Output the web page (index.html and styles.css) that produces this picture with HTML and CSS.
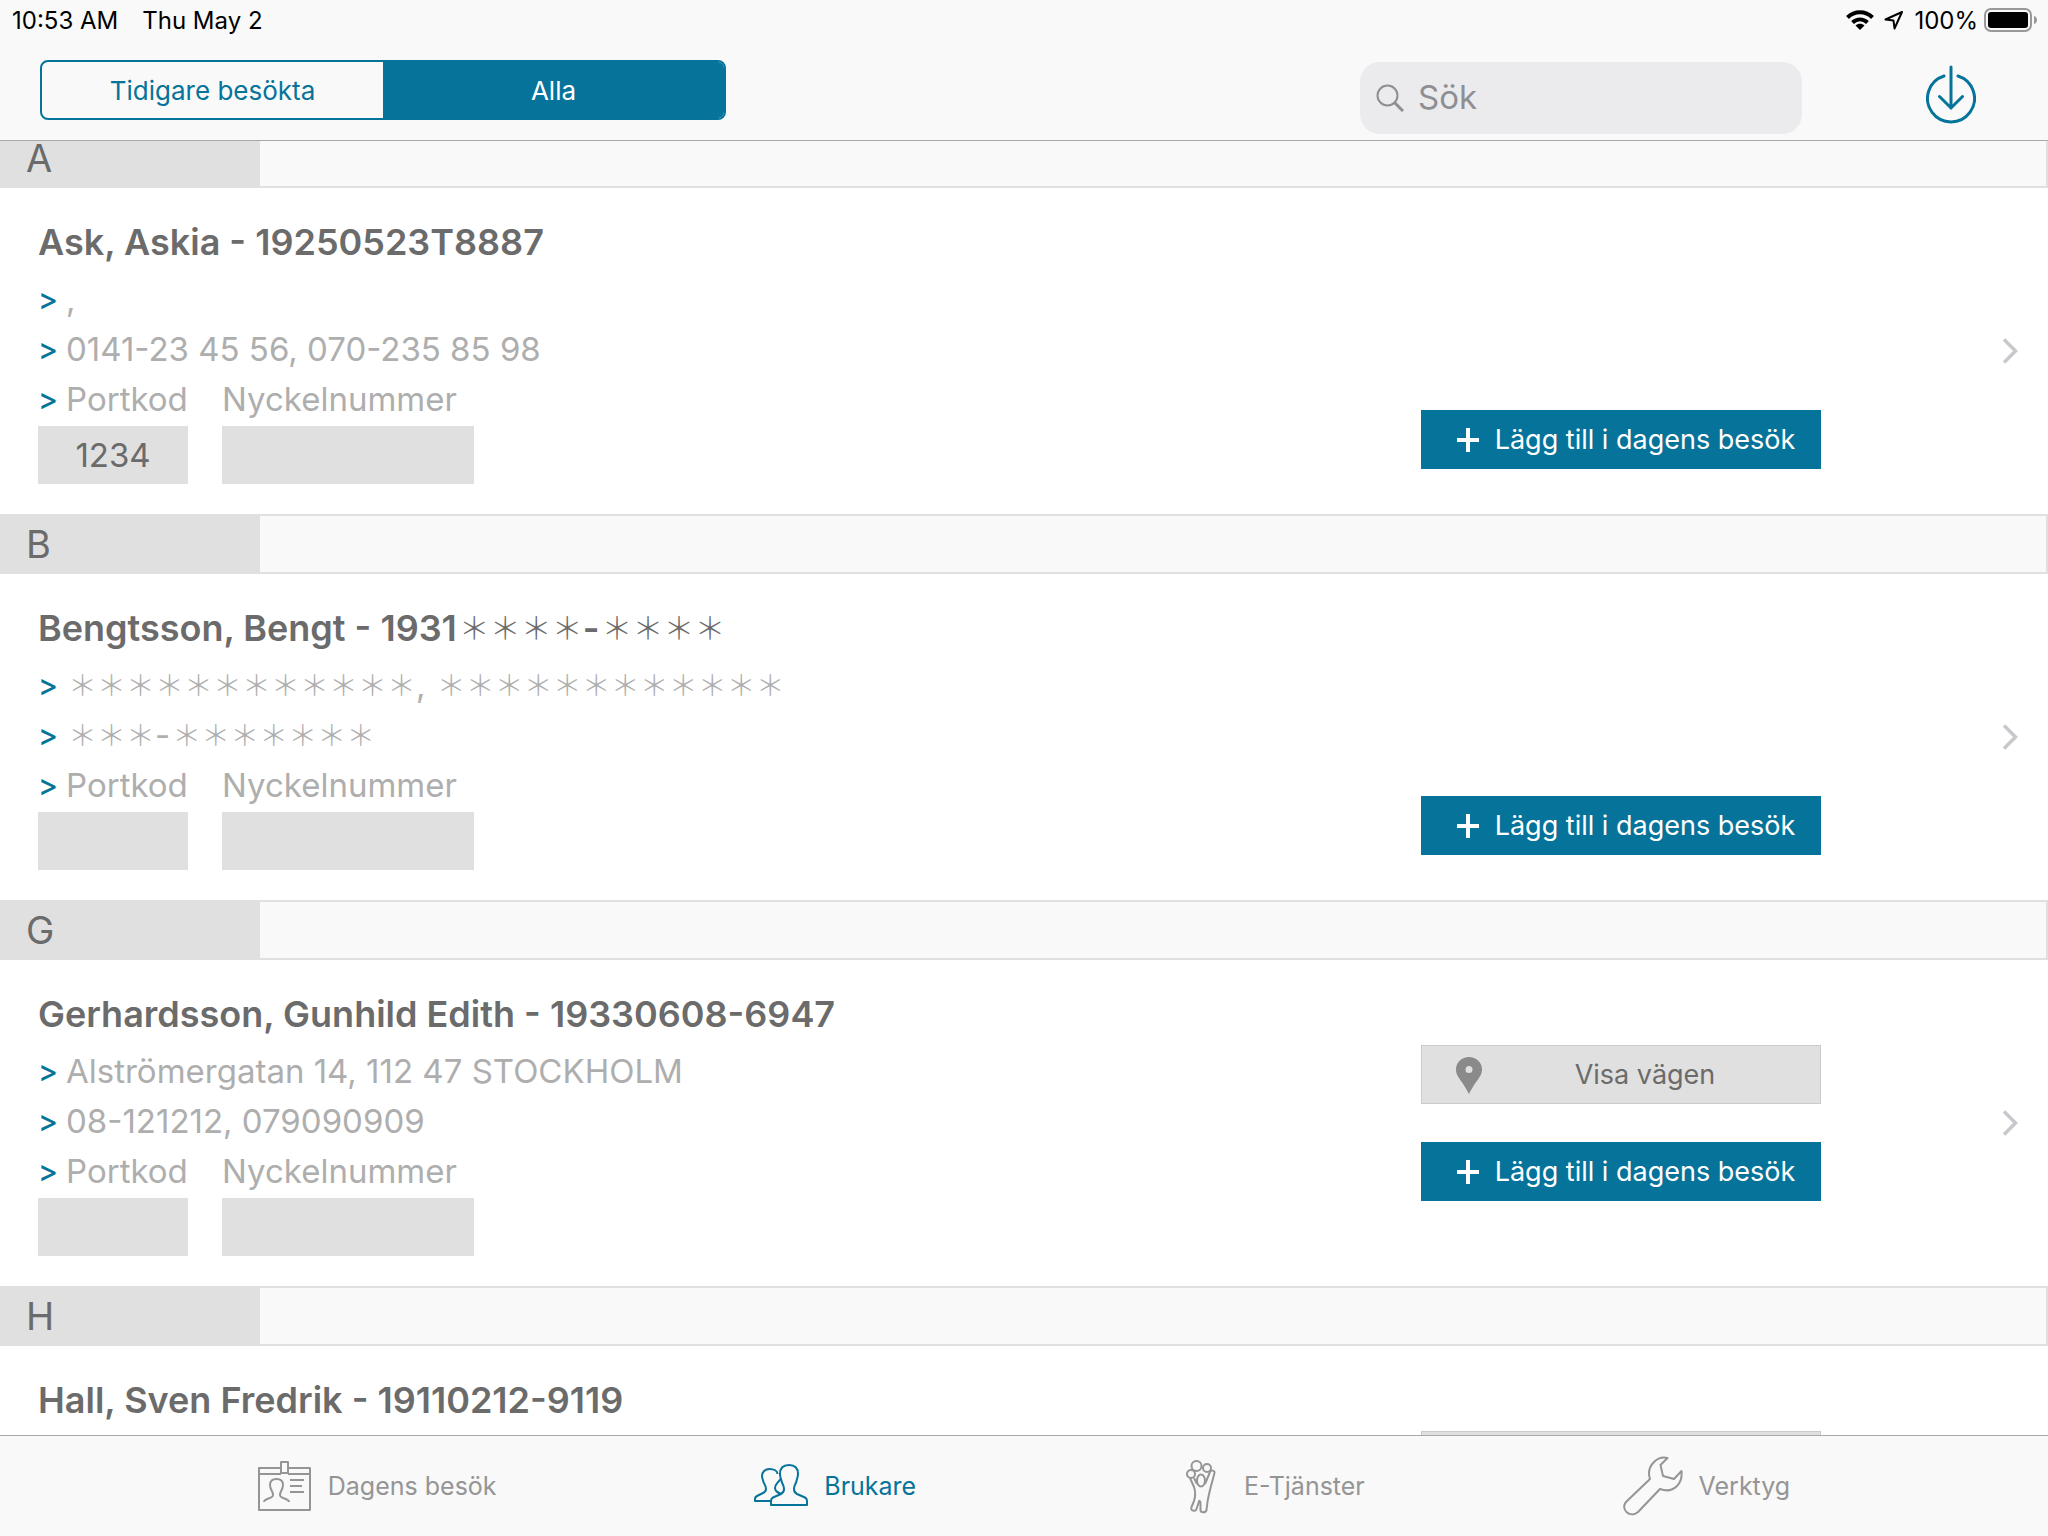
FILE: index.html
```html
<!DOCTYPE html>
<html lang="sv">
<head>
<meta charset="utf-8">
<meta name="viewport" content="width=device-width, initial-scale=1">
<title>Brukare</title>
<link rel="stylesheet" href="styles.css">
</head>
<body>
<svg class="sprite" aria-hidden="true">
  <symbol id="plus" viewBox="0 0 26 26"><path d="M13 1v24M2 13h22" fill="none" stroke="currentColor" stroke-width="4"/></symbol>
  <symbol id="pin" viewBox="0 0 26 38"><path fill="currentColor" fill-rule="evenodd" d="M13 1C6 1 0 6 0 13.500C0 21 6 24 13 38C20 24 26 21 26 13.500C26 6 20 1 13 1ZM13 10a3.500 3.500 0 1 1 0 7a3.500 3.500 0 1 1 0-7Z"/></symbol>
  <symbol id="chevron" viewBox="0 0 16 26"><path d="M2 1.500L13.500 13L2 24.500" fill="none" stroke="currentColor" stroke-width="3.500"/></symbol>
</svg>

<header class="top">
  <div class="status">
    <div class="status-group status-left"><span>10:53 AM</span><span>Thu May 2</span></div>
    <div class="status-group status-right">
      <svg width="28" height="20" viewBox="0 0 28 20" aria-hidden="true"><g fill="none" stroke="#000" stroke-width="4"><path d="M1.500 7.500C8.500 .5 19.500 .5 26.500 7.500"/><path d="M6.500 12.500C11 8.500 17 8.500 21.500 12.500"/></g><path d="M14 20L9.500 15.500C12 13.300 16 13.300 18.500 15.500Z"/></svg>
      <svg width="20" height="20" viewBox="0 0 20 20" aria-hidden="true"><path d="M18 2L1.500 9.500L9.500 10.500L10.500 18.500Z" fill="none" stroke="#000" stroke-width="2" stroke-linejoin="round"/></svg>
      <span class="battery">100%
        <svg width="54" height="24" viewBox="0 0 54 24" aria-hidden="true"><rect x="1" y="1" width="46" height="22" rx="6" fill="none" stroke="#999" stroke-width="2"/><rect x="4" y="4" width="40" height="16" rx="3"/><path d="M50 8c4 1 4 7 0 8z" fill="#999"/></svg>
      </span>
    </div>
  </div>
  <div class="toolbar">
    <div class="segments">
      <button class="segment" type="button">Tidigare besökta</button>
      <button class="segment segment-active" type="button" aria-pressed="true">Alla</button>
    </div>
    <div class="tools">
      <label class="search">
        <svg width="28" height="28" viewBox="0 0 28 28" aria-hidden="true"><circle cx="11.500" cy="11.500" r="10" fill="none" stroke="currentColor" stroke-width="2"/><path d="M18.500 18.500L27 27" stroke="currentColor" stroke-width="3"/></svg>
        <input type="search" placeholder="Sök" aria-label="Sök">
      </label>
      <button class="download" type="button" aria-label="Hämta">
        <svg width="50" height="64" viewBox="0 0 50 64" fill="none" stroke="currentColor" stroke-width="3" stroke-linecap="round" aria-hidden="true"><path d="M18 14A23.500 23.500 0 1 0 32 14M25 5V46M13.500 34.500L25 46L36.500 34.500"/></svg>
      </button>
    </div>
  </div>
</header>

<main class="content">
  <section>
    <h2 class="letter letter-first"><span>A</span></h2>
    <article class="card">
      <div class="person">
        <h3>Ask, Askia - 19250523T8887</h3>
        <p><i>&gt;</i>,</p>
        <p><i>&gt;</i>0141-23 45 56, 070-235 85 98</p>
        <div class="codes">
          <div class="code code-port"><label for="p1"><i>&gt;</i>Portkod</label><input id="p1" type="text" value="1234" readonly></div>
          <div class="code code-key"><label for="n1">Nyckelnummer</label><input id="n1" type="text" readonly></div>
        </div>
      </div>
      <div class="actions actions-low">
        <button class="action action-add" type="button"><svg width="26" height="26"><use href="#plus"/></svg><span>Lägg till i dagens besök</span></button>
      </div>
      <a class="open" href="#ask" aria-label="Öppna"><svg width="16" height="26"><use href="#chevron"/></svg></a>
    </article>
  </section>

  <section>
    <h2 class="letter"><span>B</span></h2>
    <article class="card">
      <div class="person">
        <h3>Bengtsson, Bengt - 1931<span class="mask">＊＊＊＊</span>-<span class="mask">＊＊＊＊</span></h3>
        <p><i>&gt;</i><span class="mask">＊＊＊＊＊＊＊＊＊＊＊＊</span>, <span class="mask">＊＊＊＊＊＊＊＊＊＊＊＊</span></p>
        <p><i>&gt;</i><span class="mask">＊＊＊</span>-<span class="mask">＊＊＊＊＊＊＊</span></p>
        <div class="codes">
          <div class="code code-port"><label for="p2"><i>&gt;</i>Portkod</label><input id="p2" type="text" readonly></div>
          <div class="code code-key"><label for="n2">Nyckelnummer</label><input id="n2" type="text" readonly></div>
        </div>
      </div>
      <div class="actions actions-low">
        <button class="action action-add" type="button"><svg width="26" height="26"><use href="#plus"/></svg><span>Lägg till i dagens besök</span></button>
      </div>
      <a class="open" href="#bengtsson" aria-label="Öppna"><svg width="16" height="26"><use href="#chevron"/></svg></a>
    </article>
  </section>

  <section>
    <h2 class="letter"><span>G</span></h2>
    <article class="card">
      <div class="person">
        <h3>Gerhardsson, Gunhild Edith - 19330608-6947</h3>
        <p><i>&gt;</i>Alströmergatan 14, 112 47 STOCKHOLM</p>
        <p><i>&gt;</i>08-121212, 079090909</p>
        <div class="codes">
          <div class="code code-port"><label for="p3"><i>&gt;</i>Portkod</label><input id="p3" type="text" readonly></div>
          <div class="code code-key"><label for="n3">Nyckelnummer</label><input id="n3" type="text" readonly></div>
        </div>
      </div>
      <div class="actions">
        <button class="action action-route" type="button"><svg width="26" height="38"><use href="#pin"/></svg><span>Visa vägen</span></button>
        <button class="action action-add" type="button"><svg width="26" height="26"><use href="#plus"/></svg><span>Lägg till i dagens besök</span></button>
      </div>
      <a class="open" href="#gerhardsson" aria-label="Öppna"><svg width="16" height="26"><use href="#chevron"/></svg></a>
    </article>
  </section>

  <section>
    <h2 class="letter"><span>H</span></h2>
    <article class="card">
      <div class="person">
        <h3>Hall, Sven Fredrik - 19110212-9119</h3>
      </div>
      <div class="actions">
        <button class="action action-route" type="button" aria-label="Visa vägen"><svg width="26" height="38"><use href="#pin"/></svg></button>
        <button class="action action-add" type="button" aria-label="Lägg till i dagens besök"><svg width="26" height="26"><use href="#plus"/></svg></button>
      </div>
      <a class="open" href="#hall" aria-label="Öppna"><svg width="16" height="26"><use href="#chevron"/></svg></a>
    </article>
  </section>
</main>

<nav class="tabs">
  <a class="tab" href="#dagens-besok">
    <svg width="54" height="60" viewBox="0 0 54 60" aria-hidden="true"><g transform="translate(0 5)"><path d="M23 7H1V49H52V7H30M1 13H23M30 13H52M23 1H30V12H23Z"/><path d="M6 41C6 37 15 38 15 34C15 30 12 29 12 24C12 20 14 18 18.500 18C23 18 25 20 25 24C25 29 22 30 22 34C22 38 31 37 31 41M32 19H46M32 25H44M32 31H46"/></g></svg>
    <span>Dagens besök</span>
  </a>
  <a class="tab tab-active" href="#brukare" aria-current="page">
    <svg width="54" height="60" viewBox="0 0 54 60" aria-hidden="true"><g transform="translate(0 8)"><path d="M35 1C29 1 26 4 26 10C26 14 27 14 27.500 17C28 20 30 21 30 25C30 28 29 29 27 30L19 33.500Q17 34.500 17 37V41H53V37Q53 34.500 51 33.500L43 30C41 29 40 28 40 25C40 21 42 20 42.500 17C43 14 44 14 44 10C44 4 41 1 35 1Z"/><path d="M23.500 10C23.500 7 20 5 15.500 5C11 5 8 8 8 12C8 15 9 15 9.500 18C10 20 12 21 12 25C12 27 11 28 9 29L3 32Q1 33 1 35V37H17M26.500 15C23 20 21 20 21 24C21 27 23 28 27 30"/></g></svg>
    <span>Brukare</span>
  </a>
  <a class="tab" href="#e-tjanster">
    <svg width="54" height="60" viewBox="0 0 54 60" aria-hidden="true"><g transform="translate(12 4)"><circle cx="10.500" cy="6" r="5"/><circle cx="21" cy="8" r="4"/><circle cx="5" cy="14" r="4"/><ellipse cx="15" cy="20.500" rx="4" ry="6"/><path d="M24 12C25 9.500 29 10.500 28.500 13L25 26C23 34 22 38 21.500 42L20.500 50C20 53 14.500 53 14.500 50L14.500 44C14.500 40 13 40 12.500 43L10.500 49C9.500 52 4 51 5.500 47L8 41C10 35 9 30 8 27L4 18M8 18L11 24M19 24L24 12"/></g></svg>
    <span>E-Tjänster</span>
  </a>
  <a class="tab" href="#verktyg">
    <svg width="60" height="60" viewBox="0 0 60 60" aria-hidden="true"><path d="M44.500 2C38 .5 34 3 31 6C26 11 25 17 27 23L3 46C-3 53 7 63 15 56L37 33C45 36 51 33 54 30C58 26 59 20 58.500 15L51 23L40 20L37.500 9Z"/></svg>
    <span>Verktyg</span>
  </a>
</nav>
</body>
</html>
```
FILE: styles.css
```css
* {
  box-sizing: border-box;
}

:root {
  --accent: #05739a;
  --ink: #6b6b6b;
  --muted: #aeaeae;
  --line: #e0e0e0;
  --bar: #f9f9f9;
}

body {
  margin: 0;
  height: 100vh;
  display: flex;
  flex-direction: column;
  background: #fff;
  color: var(--ink);
  font-family: Inter, "Noto Sans CJK SC", sans-serif;
}

button,
input {
  margin: 0;
  padding: 0;
  border: 0;
  border-radius: 0;
  font: inherit;
  color: inherit;
}

h2,
h3,
p {
  margin: 0;
}

a {
  color: inherit;
  text-decoration: none;
}

svg {
  display: block;
  flex: none;
}

.sprite {
  position: absolute;
  width: 0;
  height: 0;
}

/* Top bar */

.top {
  flex: none;
  background: var(--bar);
  border-bottom: 1px solid #a9a9a9;
}

.status {
  height: 40px;
  padding: 0 10px 0 12px;
  display: flex;
  align-items: center;
  justify-content: space-between;
  color: #000;
  font-size: 24px;
}

.status-group,
.battery {
  display: flex;
  align-items: center;
}

.status-left {
  gap: 24px;
}

.status-right {
  gap: 10px;
}

.battery {
  gap: 6px;
}

.toolbar {
  min-height: 100px;
  padding: 20px 72px 6px 40px;
  display: flex;
  align-items: flex-start;
  justify-content: space-between;
}

.segments {
  width: 686px;
  height: 60px;
  display: grid;
  grid-template-columns: 1fr 1fr;
  border: 2px solid var(--accent);
  border-radius: 8px;
  overflow: hidden;
}

.segment {
  background: transparent;
  color: var(--accent);
  font-size: 26px;
}

.segment-active {
  background: var(--accent);
  color: #fff;
}

.tools {
  padding-top: 2px;
  display: flex;
  gap: 124px;
}

.search {
  width: 442px;
  height: 72px;
  padding: 0 16px;
  display: flex;
  align-items: center;
  gap: 14px;
  border-radius: 20px;
  background: #ebebed;
  color: #8e8e93;
}

.search input {
  flex: 1;
  min-width: 0;
  padding-bottom: 3px;
  background: transparent;
  outline: 0;
  font-size: 33px;
}

.search input::placeholder {
  color: inherit;
  opacity: 1;
}

.download {
  height: 64px;
  background: transparent;
  color: var(--accent);
}

/* Client list */

.content {
  flex: 1;
  min-height: 0;
  overflow: hidden;
}

.letter {
  height: 60px;
  display: flex;
  border: 2px solid var(--line);
  border-left: 0;
  background: var(--bar);
  font-size: 38px;
  font-weight: 400;
  line-height: 56px;
}

/* The first heading is partly scrolled under the top bar. */
.letter-first {
  height: 47px;
  border-top: 0;
  line-height: 34px;
}

.letter span {
  width: 260px;
  padding-left: 26px;
  background: var(--line);
}

.card {
  min-height: 326px;
  padding: 0 30px 0 38px;
  display: flex;
  align-items: center;
}

.person {
  flex: 1;
  align-self: stretch;
  padding: 24px 0 30px;
}

.person h3 {
  display: flex;
  height: 62px;
  font-size: 36px;
  font-weight: 600;
  line-height: 60px;
}

.person p,
.code label {
  display: flex;
  align-items: center;
  height: 50px;
  color: var(--muted);
  font-size: 33px;
  line-height: 50px;
  white-space: pre;
}

.person i {
  width: 28px;
  color: var(--accent);
  font-size: 30px;
  font-style: normal;
  font-weight: 500;
}

.mask {
  padding: 0 0 4px 2px;
  font-family: "Noto Sans CJK SC", sans-serif;
  font-size: 29px;
  font-weight: 300;
  line-height: 46px;
}

h3 .mask {
  font-size: 31px;
  line-height: 56px;
}

.codes {
  display: flex;
  gap: 34px;
}

.code {
  display: grid;
  gap: 2px;
}

.code-port {
  width: 150px;
}

.code-key {
  width: 252px;
}

.code input {
  width: 100%;
  height: 58px;
  background: var(--line);
  font-size: 33px;
  text-align: center;
}

.actions {
  width: 400px;
  margin-right: 181px;
  display: grid;
  gap: 38px;
}

.actions-low {
  align-self: flex-end;
  margin-bottom: 45px;
}

.action {
  height: 59px;
  padding: 0 12px 0 34px;
  display: flex;
  align-items: center;
  font-size: 27px;
}

.action span {
  flex: 1;
  white-space: nowrap;
}

.action-add {
  background: var(--accent);
  color: #fff;
}

.action-route {
  background: var(--line);
  border: 1px solid #cbcbcb;
}

.action-route svg {
  color: #8a8a8a;
}

.open {
  color: #c7c7cc;
}

/* Tab bar */

.tabs {
  flex: none;
  height: 101px;
  display: flex;
  align-items: center;
  justify-content: space-evenly;
  background: var(--bar);
  border-top: 1px solid #a9a9a9;
  color: #959595;
  font-size: 25px;
}

.tab {
  display: flex;
  align-items: center;
  gap: 16px;
}

.tab svg {
  fill: none;
  stroke: currentColor;
  stroke-width: 2;
  stroke-linejoin: round;
}

.tab-active {
  color: var(--accent);
}
```
